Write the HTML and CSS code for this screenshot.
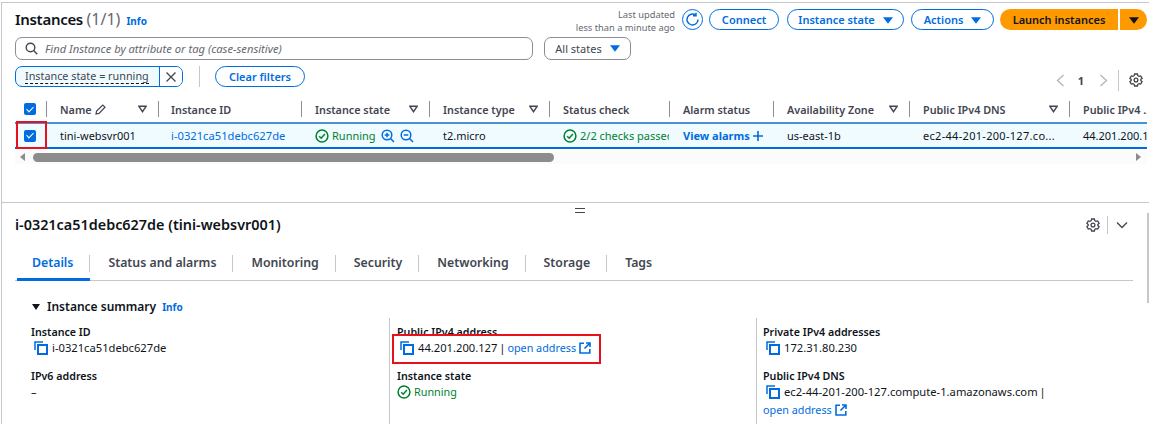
FILE: index.html
```html
<!DOCTYPE html>
<html lang="en">

<head>
    <meta charset="UTF-8">
    <meta name="viewport" content="width=device-width, initial-scale=1.0">
    <title>Instances</title>
    <link rel="stylesheet" href="styles.css">
</head>

<body>
    <svg class="icon-defs" width="0" height="0">
        <defs>
            <symbol id="copy" viewBox="0 0 14 14">
                <path d="M1 9V1h8" fill="none" stroke="currentColor" stroke-width="1.5" />
                <rect x="4" y="4" width="9" height="9" fill="none" stroke="currentColor" stroke-width="2" />
            </symbol>
            <symbol id="external" viewBox="0 0 12 12">
                <path d="M5 1.2H1v9.8h9.8V7M7 1h4v4M11 1 5.5 6.500" fill="none" stroke="currentColor" stroke-width="1.6" />
            </symbol>
            <symbol id="ok" viewBox="0 0 14 14">
                <circle cx="7" cy="7" r="5.900" fill="none" stroke="currentColor" stroke-width="1.500" />
                <path d="M4.200 7.200 6.200 9.200 9.900 5" fill="none" stroke="currentColor" stroke-width="1.500" />
            </symbol>
            <symbol id="gear" viewBox="0 0 14 14">
                <path d="M5.600 1h2.800l.4 1.700 1.200.7 1.700-.5 1.400 2.400-1.300 1.200v1l1.300 1.200-1.400 2.400-1.700-.5-1.200.7L8.400 13H5.600l-.4-1.700-1.200-.7-1.700.5L.9 8.700 2.200 7.500v-1L.900 5.300l1.400-2.400 1.700.5 1.200-.7z" fill="none" stroke="currentColor" stroke-width="1.300" />
                <circle cx="7" cy="7" r="1.900" fill="none" stroke="currentColor" stroke-width="1.300" />
            </symbol>
            <symbol id="filter" viewBox="0 0 10 8">
                <path d="M1 1h8L5 7z" fill="none" stroke="currentColor" stroke-width="1.600" />
            </symbol>
            <symbol id="caret" viewBox="0 0 12 8">
                <path d="M0 0h12L6 8z" fill="currentColor" />
            </symbol>
        </defs>
    </svg>

    <div class="page">
        <section class="list-panel">
            <div class="top-row">
                <div class="title-block">
                    <h1>Instances <span class="count">(1/1)</span></h1>
                    <a class="info">Info</a>
                </div>
                <div class="actions">
                    <div class="updated">Last updated<br>less than a minute ago</div>
                    <button class="btn btn-round">
                        <svg width="15" height="15" viewBox="0 0 15 15"><path d="M13 7.500A5.500 5.500 0 1 1 10.800 3.100M11 .8v3H8" fill="none" stroke="currentColor" stroke-width="1.500" /></svg>
                    </button>
                    <button class="btn btn-connect">Connect</button>
                    <button class="btn btn-state">Instance state <svg class="caret"><use href="#caret" /></svg></button>
                    <button class="btn btn-actions">Actions <svg class="caret"><use href="#caret" /></svg></button>
                    <div class="launch">
                        <button class="launch-main">Launch instances</button>
                        <button class="launch-side"><svg class="caret"><use href="#caret" /></svg></button>
                    </div>
                </div>
            </div>

            <div class="search-row">
                <div class="search">
                    <svg width="13" height="13" viewBox="0 0 13 13"><circle cx="5.500" cy="5.500" r="4.300" fill="none" stroke="currentColor" stroke-width="1.400" /><path d="M8.600 8.600 12.300 12.300" stroke="currentColor" stroke-width="1.400" /></svg>
                    <span>Find Instance by attribute or tag (case-sensitive)</span>
                </div>
                <div class="states">All states <svg class="caret"><use href="#caret" /></svg></div>
            </div>

            <div class="filter-row">
                <div class="token">
                    <span class="token-text"><span>Instance state = running</span></span>
                    <span class="token-close">
                        <svg width="10" height="10" viewBox="0 0 10 10"><path d="M.5.500l9 9M9.500.500l-9 9" stroke="currentColor" stroke-width="1.300" /></svg>
                    </span>
                </div>
                <span class="filter-sep"></span>
                <button class="btn btn-clear">Clear filters</button>
                <div class="pager">
                    <svg width="9" height="13" viewBox="0 0 9 13"><path d="M7.500 1 1.500 6.500l6 5.500" fill="none" stroke="#b4b4bb" stroke-width="1.300" /></svg>
                    <b>1</b>
                    <svg width="9" height="13" viewBox="0 0 9 13"><path d="M1.500 1l6 5.500-6 5.500" fill="none" stroke="#b4b4bb" stroke-width="1.300" /></svg>
                    <span class="pager-sep"></span>
                    <svg class="gear" width="14" height="14"><use href="#gear" /></svg>
                </div>
            </div>

            <div class="table">
                <div class="grid head">
                    <div class="cell cell-check"><span class="check"></span></div>
                    <div class="cell"><span class="name-head">Name
                        <svg width="11" height="11" viewBox="0 0 11 11"><path d="M1 10l.6-3L7.800 1 10 3.200 4 9.400z" fill="none" stroke="currentColor" stroke-width="1.200" /></svg></span>
                        <svg class="filter"><use href="#filter" /></svg></div>
                    <div class="cell cell-id">Instance ID</div>
                    <div class="cell">Instance state <svg class="filter"><use href="#filter" /></svg></div>
                    <div class="cell">Instance type <svg class="filter"><use href="#filter" /></svg></div>
                    <div class="cell">Status check</div>
                    <div class="cell">Alarm status</div>
                    <div class="cell">Availability Zone <svg class="filter"><use href="#filter" /></svg></div>
                    <div class="cell">Public IPv4 DNS <svg class="filter"><use href="#filter" /></svg></div>
                    <div class="cell cell-last">Public IPv4 ...</div>
                </div>
                <div class="grid row">
                    <div class="cell cell-check"><span class="check"></span></div>
                    <div class="cell">tini-websvr001</div>
                    <div class="cell cell-id"><a class="link">i-0321ca51debc627de</a></div>
                    <div class="cell">
                        <span class="status"><svg width="14" height="14"><use href="#ok" /></svg>Running</span>
                        <span class="zooms">
                            <svg width="14" height="14" viewBox="0 0 14 14"><circle cx="6" cy="6" r="4.800" fill="none" stroke="currentColor" stroke-width="1.500" /><path d="M9.500 9.500 13 13M3.700 6h4.600M6 3.700v4.600" fill="none" stroke="currentColor" stroke-width="1.500" /></svg>
                            <svg width="14" height="14" viewBox="0 0 14 14"><circle cx="6" cy="6" r="4.800" fill="none" stroke="currentColor" stroke-width="1.500" /><path d="M9.500 9.500 13 13M3.700 6h4.600" fill="none" stroke="currentColor" stroke-width="1.500" /></svg>
                        </span>
                    </div>
                    <div class="cell">t2.micro</div>
                    <div class="cell cell-clip"><span class="status"><svg width="14" height="14"><use href="#ok" /></svg>2/2 checks passed</span></div>
                    <div class="cell"><a class="link strong">View alarms</a>
                        <svg class="plus" width="12" height="12" viewBox="0 0 12 12"><path d="M6 1v10M1 6h10" stroke="currentColor" stroke-width="1.600" /></svg></div>
                    <div class="cell">us-east-1b</div>
                    <div class="cell cell-dns">ec2-44-201-200-127.co...</div>
                    <div class="cell cell-last">44.201.200.127</div>
                </div>
                <div class="red-box red-row"></div>
            </div>

            <div class="scrollbar">
                <span class="arrow arrow-left"></span>
                <span class="thumb"></span>
                <span class="arrow arrow-right"></span>
            </div>
        </section>

        <section class="detail-panel">
            <div class="handle"></div>
            <div class="detail-head">
                <h2>i-0321ca51debc627de (tini-websvr001)</h2>
                <div class="detail-tools">
                    <svg width="14" height="14"><use href="#gear" /></svg>
                    <span class="pager-sep"></span>
                    <svg width="12" height="8" viewBox="0 0 12 8"><path d="M1 1.500 6 6.500l5-5" fill="none" stroke="currentColor" stroke-width="1.300" /></svg>
                </div>
            </div>

            <nav class="tabs">
                <a class="tab active">Details</a>
                <a class="tab">Status and alarms</a>
                <a class="tab">Monitoring</a>
                <a class="tab">Security</a>
                <a class="tab">Networking</a>
                <a class="tab">Storage</a>
                <a class="tab">Tags</a>
            </nav>

            <h3 class="summary-title"><span class="tri"></span>Instance summary <a class="info">Info</a></h3>

            <div class="summary">
                <div class="col">
                    <div class="label">Instance ID</div>
                    <div class="value"><svg class="copy"><use href="#copy" /></svg>i-0321ca51debc627de</div>
                    <div class="label label-2">IPv6 address</div>
                    <div class="value">–</div>
                </div>
                <div class="col">
                    <div class="label">Public IPv4 address</div>
                    <div class="value"><svg class="copy"><use href="#copy" /></svg>44.201.200.127 | <a class="link">open address</a> <svg class="ext"><use href="#external" /></svg></div>
                    <div class="label label-2">Instance state</div>
                    <div class="value"><span class="status"><svg width="14" height="14"><use href="#ok" /></svg>Running</span></div>
                    <div class="red-box red-ip"></div>
                </div>
                <div class="col">
                    <div class="label">Private IPv4 addresses</div>
                    <div class="value"><svg class="copy"><use href="#copy" /></svg>172.31.80.230</div>
                    <div class="label label-2">Public IPv4 DNS</div>
                    <div class="value"><svg class="copy"><use href="#copy" /></svg>ec2-44-201-200-127.compute-1.amazonaws.com |</div>
                    <div class="value value-link"><a class="link">open address</a> <svg class="ext"><use href="#external" /></svg></div>
                </div>
            </div>
        </section>

        <div class="page-scroll"></div>
    </div>
</body>

</html>
```

FILE: styles.css
```css
* {
    box-sizing: border-box;
}

html,
body {
    height: 100%;
}

body {
    margin: 0;
    overflow: hidden;
    background: #fff;
    font-family: "Noto Sans", Arial, sans-serif;
    font-size: 11px;
    color: #0f141a;
}

.icon-defs {
    display: block;
    height: 0;
}

.page {
    position: relative;
    height: 424px;
    padding-top: 2px;
}

.list-panel {
    height: 200px;
    margin-left: 1px;
    padding: 6px 2px 0 13px;
    border-top: 1px solid #c6c6cd;
    border-left: 1px solid #c6c6cd;
}

button {
    font-family: inherit;
}

.caret {
    width: 10px;
    height: 7px;
    color: inherit;
}

/* top bar */
.top-row {
    display: flex;
    justify-content: space-between;
    height: 21px;
}

.title-block {
    display: flex;
    align-items: baseline;
    gap: 6px;
}

h1 {
    margin: 0;
    font-size: 15px;
    line-height: 20px;
    font-weight: 600;
    letter-spacing: -0.3px;
    color: #0f141a;
}

.count {
    font-size: 16px;
    font-weight: 400;
    letter-spacing: 0;
    color: #656871;
}

.info {
    color: #006ce0;
    font-size: 10px;
    font-weight: 700;
}

.actions {
    display: flex;
    align-items: flex-start;
}

.updated {
    margin-right: 7px;
    margin-top: -1px;
    font-size: 9.300px;
    line-height: 13px;
    text-align: right;
    color: #656871;
}

.btn {
    height: 21px;
    padding: 0;
    border: 1px solid #006ce0;
    border-radius: 11px;
    background: #fff;
    color: #006ce0;
    font-size: 11px;
    font-weight: 600;
    white-space: nowrap;
}

.btn .caret {
    margin-left: 5px;
}

.btn-round {
    display: flex;
    align-items: center;
    justify-content: center;
    width: 21px;
    margin-right: 6px;
}

.btn-connect {
    width: 70px;
    margin-right: 8px;
}

.btn-state {
    width: 117px;
    margin-right: 7px;
}

.btn-actions {
    width: 83px;
    margin-right: 6px;
}

.launch {
    display: flex;
    gap: 2px;
}

.launch-main,
.launch-side {
    height: 21px;
    border: none;
    padding: 0;
    background: #ff9900;
    color: #0f141a;
    font-size: 11px;
    font-weight: 600;
}

.launch-main {
    width: 118px;
    border-radius: 11px 0 0 11px;
}

.launch-side {
    width: 27px;
    border-radius: 0 11px 11px 0;
}

/* search */
.search-row {
    display: flex;
    gap: 11px;
    margin-top: 7px;
}

.search {
    display: flex;
    align-items: center;
    gap: 7px;
    width: 518px;
    height: 23px;
    padding-left: 9px;
    border: 1px solid #8c8c94;
    border-radius: 7px;
    color: #424650;
}

.search span {
    font-style: italic;
    color: #656871;
    font-size: 11.200px;
}

.states {
    display: flex;
    align-items: center;
    justify-content: center;
    gap: 8px;
    width: 87px;
    height: 23px;
    border: 1px solid #8c8c94;
    border-radius: 7px;
    color: #424650;
}

.states .caret {
    color: #006ce0;
}

/* filter token and pager */
.filter-row {
    display: flex;
    align-items: center;
    margin-top: 6px;
    height: 21px;
}

.token {
    display: flex;
    width: 168px;
    height: 21px;
    border: 1px solid #006ce0;
    border-radius: 7px;
    background: #f0fbff;
    overflow: hidden;
}

.token-text {
    width: 143px;
    padding-left: 9px;
    font-size: 10.800px;
    line-height: 18px;
    white-space: nowrap;
    color: #424650;
}

.token-text span {
    border-bottom: 1px dashed #0f141a;
}

.token-close {
    display: flex;
    align-items: center;
    justify-content: center;
    flex: 1;
    background: #fff;
    border-left: 1px solid #006ce0;
    color: #424650;
}

.filter-sep {
    width: 1px;
    height: 21px;
    margin: 0 15px 0 16px;
    background: #c6c6cd;
}

.btn-clear {
    width: 90px;
}

.pager {
    display: flex;
    align-items: center;
    margin-left: auto;
    margin-top: 7px;
    height: 21px;
    color: #424650;
}

.pager b {
    margin: 0 15px 0 13px;
}

.pager-sep {
    display: inline-block;
    width: 1px;
    height: 21px;
    margin: 0 10px;
    background: #c6c6cd;
}

.gear {
    margin-right: 4px;
}

/* table */
.table {
    position: relative;
    margin-top: 14px;
}

.grid {
    display: grid;
    grid-template-columns: 31px 112px 143px 128px 120px 120px 104px 136px 160px 78px;
    width: 1132px;
}

.head {
    height: 21px;
    font-size: 10.800px;
    font-weight: 600;
    color: #424650;
}

.head .cell {
    position: relative;
    display: flex;
    align-items: center;
    justify-content: space-between;
    height: 16px;
    margin-top: 0;
    padding: 0 11px 0 13px;
    border-left: 1px solid #8c8c94;
    white-space: nowrap;
}

.head .cell-check,
.row .cell-check {
    padding: 0 0 0 9px;
    border-left: none;
}

.head .cell-last {
    padding-right: 0;
    overflow: hidden;
}

.head .cell-id {
    padding-left: 12px;
}

.name-head {
    display: flex;
    align-items: center;
    gap: 3px;
}

.filter {
    width: 9px;
    height: 8px;
    flex: none;
    color: #424650;
}

.check {
    display: block;
    position: relative;
    width: 12px;
    height: 12px;
    border-radius: 2px;
    background: #006ce0;
}

.check::after {
    content: "";
    position: absolute;
    left: 4px;
    top: 1.500px;
    width: 3px;
    height: 6px;
    border: solid #fff;
    border-width: 0 1.500px 1.500px 0;
    transform: rotate(45deg);
}

.row {
    height: 27px;
    align-items: center;
    background: #f0fbff;
    border-top: 2px solid #006ce0;
    border-bottom: 2px solid #006ce0;
    border-top-color: #4a8fd8;
    color: #0f141a;
}

.row .cell {
    display: flex;
    align-items: center;
    padding-left: 14px;
    white-space: nowrap;
}

.row .cell-check {
    padding-left: 9px;
}

.row .cell-id {
    padding-left: 13px;
}

.row .cell-clip {
    overflow: hidden;
}

.row .cell-last {
    overflow: hidden;
}

.row .cell-dns {
    letter-spacing: 0.3px;
}

.link {
    color: #006ce0;
    font-size: 11.200px;
}

.strong {
    font-size: 11px;
    font-weight: 700;
}

.plus {
    margin-left: 2px;
    color: #006ce0;
}

.status {
    display: inline-flex;
    align-items: center;
    gap: 3px;
    color: #00802f;
}

.zooms {
    display: flex;
    gap: 5px;
    margin-left: 5px;
    color: #006ce0;
}

.red-box {
    position: absolute;
    border: 2px solid #e8101c;
}

.red-row {
    left: 1px;
    top: 20px;
    width: 31px;
    height: 28px;
}

/* horizontal scrollbar */
.scrollbar {
    display: flex;
    align-items: center;
    height: 14px;
    margin-top: 1px;
    width: 1132px;
    background: #fbfbfb;
}

.thumb {
    width: 521px;
    height: 9px;
    margin-left: 8px;
    border-radius: 5px;
    background: #8c8c8c;
}

.arrow {
    width: 0;
    height: 0;
    border-top: 4px solid transparent;
    border-bottom: 4px solid transparent;
}

.arrow-left {
    margin-left: 5px;
    border-right: 5px solid #8c8c8c;
    margin-right: 0;
}

.arrow-right {
    margin-left: auto;
    margin-right: 6px;
    border-left: 5px solid #8c8c8c;
}

/* details */
.detail-panel {
    position: relative;
    height: 222px;
    margin-left: 1px;
    padding: 0 16px 0 13px;
    border-top: 1px solid #c6c6cd;
    border-left: 1px solid #c6c6cd;
}

.handle {
    position: absolute;
    left: 573px;
    top: 5px;
    width: 10px;
    height: 5px;
    border-top: 1px solid #424650;
    border-bottom: 1px solid #424650;
}

.detail-head {
    display: flex;
    justify-content: space-between;
    align-items: center;
    height: 20px;
    margin-top: 12px;
}

h2 {
    margin: 0;
    font-size: 14.400px;
    font-weight: 600;
    line-height: 20px;
}

.detail-tools {
    display: flex;
    align-items: center;
    margin-right: 5px;
    color: #424650;
}

.detail-tools .pager-sep {
    height: 18px;
    margin: 0 8px 0 7px;
}

.tabs {
    display: flex;
    height: 37px;
    margin-top: 9px;
    padding-left: 2px;
    border-bottom: 1px solid #c6c6cd;
}

.tab {
    position: relative;
    height: 17px;
    margin-top: 11px;
    padding: 0 16px 0 18px;
    border-right: 1px solid #c6c6cd;
    font-size: 12.300px;
    font-weight: 600;
    line-height: 16px;
    color: #424650;
    white-space: nowrap;
}

.tab:first-child {
    padding-left: 15px;
}

.tab:last-child {
    border-right: none;
}

.tab.active {
    color: #006ce0;
}

.tab.active::after {
    content: "";
    position: absolute;
    left: 0;
    right: -1px;
    bottom: -9px;
    height: 3px;
    background: #006ce0;
}

.summary-title {
    display: flex;
    align-items: center;
    height: 18px;
    margin: 17px 0 0 17px;
    font-size: 12px;
    font-weight: 600;
    line-height: 18px;
}

.summary-title .info {
    margin-left: 6px;
}

.tri {
    width: 0;
    height: 0;
    margin-right: 7px;
    border-left: 4px solid transparent;
    border-right: 4px solid transparent;
    border-top: 6px solid #0f141a;
}

.summary {
    display: grid;
    grid-template-columns: 358px 367px 1fr;
    margin-left: 16px;
    margin-top: 2px;
}

.col {
    position: relative;
    height: 110px;
    padding: 6px 0 0 7px;
    border-left: 1px solid #c6c6cd;
}

.col:first-child {
    padding-left: 0;
    border-left: none;
}

.col:last-child {
    padding-left: 6px;
}

.label {
    height: 16px;
    font-size: 10.700px;
    font-weight: 600;
    line-height: 16px;
}

.label-2 {
    margin-top: 12px;
}

.value {
    display: flex;
    align-items: center;
    height: 16px;
    font-size: 11.200px;
    line-height: 16px;
    color: #0f141a;
    white-space: pre;
    word-spacing: -1px;
}

.value-link {
    margin-top: 2px;
}

.value .link {
    font-size: 10.800px;
    word-spacing: 0;
}

.value .status {
    font-size: 10.800px;
}

.copy {
    width: 14px;
    height: 14px;
    margin: 0 4px 0 3px;
    color: #006ce0;
}

.ext {
    width: 12px;
    height: 12px;
    margin-left: 3px;
    color: #006ce0;
}

.red-ip {
    left: 2px;
    top: 16px;
    width: 209px;
    height: 30px;
}

.page-scroll {
    position: absolute;
    right: 0;
    top: 213px;
    width: 2px;
    height: 90px;
    background: #c6c6cd;
}
```
